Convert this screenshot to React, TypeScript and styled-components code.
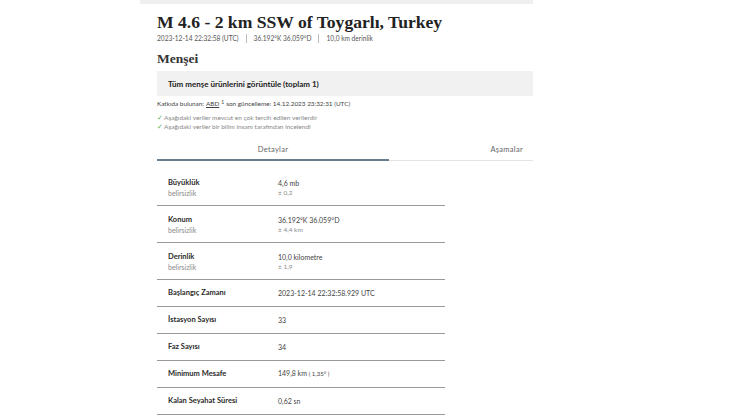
import React from "react";
import styled, { createGlobalStyle } from "styled-components";

const Global = createGlobalStyle`
  html, body { margin: 0; padding: 0; background: #fff; }
  body { font-family: Lato, "Noto Sans", sans-serif; color: #222; }
`;

const Page = styled.div`
  margin-left: 140px;
  width: 393px;
`;

const TopBar = styled.div`
  height: 4px;
  background: #efefef;
`;

const Content = styled.div`
  padding: 0 0 0 17px;
`;

const Title = styled.h1`
  margin: 8px 0 0;
  font-family: "Liberation Serif", serif;
  font-weight: bold;
  font-size: 17.6px;
  line-height: 21px;
  color: #222;
`;

const Meta = styled.div`
  display: flex;
  align-items: center;
  margin-top: 0;
  font-size: 6.6px;
  color: #555;
  line-height: 10px;
`;

const Sep = styled.span`
  display: inline-block;
  width: 1px;
  height: 9px;
  background: #bbb;
  margin: 0 7px;
`;

const Section = styled.h2`
  margin: 7.5px 0 0;
  font-family: "Liberation Serif", serif;
  font-weight: bold;
  font-size: 13.5px;
  line-height: 16px;
  color: #333;
`;

const GreyBox = styled.div`
  margin-top: 4.5px;
  background: #f1f1f1;
  height: 25px;
  display: flex;
  align-items: center;
  padding-left: 11px;
  font-size: 8px;
  font-weight: bold;
  color: #222;
`;

const Contrib = styled.div`
  margin-top: 3px;
  font-size: 6.4px;
  line-height: 10px;
  height: 10px;
  color: #444;
`;

const Link = styled.span`
  text-decoration: underline;
  margin-left: 2px;
`;

const Sup = styled.span`
  font-size: 5px;
  line-height: 0;
  position: relative;
  top: -2px;
  margin: 0 2px;
`;

const Checks = styled.div`
  margin-top: 3.5px;
  font-size: 6.5px;
  line-height: 9px;
  color: #888;
`;

const Tick = styled.span`
  color: #5cae5c;
  margin-right: 1px;
`;

const Tabs = styled.div`
  display: flex;
  margin-top: 12px;
  border-bottom: 1px solid #e4e4e4;
`;

const Tab = styled.div<{ $active?: boolean }>`
  flex: ${(p) => (p.$active ? "0 0 232px" : "1")};
  text-align: ${(p) => (p.$active ? "center" : "right")};
  padding: ${(p) => (p.$active ? "0" : "0 10px 0 0")};
  font-size: 7.5px;
  letter-spacing: 0.3px;
  color: #666;
  height: 16px;
  line-height: 14px;
  border-bottom: ${(p) => (p.$active ? "2px solid #6a7d8c" : "2px solid transparent")};
  margin-bottom: -1px;
`;

const Table = styled.div`
  width: 288px;
  margin-top: 8px;
`;

const Row = styled.div<{ $tall?: boolean }>`
  display: grid;
  grid-template-columns: 110px 1fr;
  align-items: ${(p) => (p.$tall ? "start" : "center")};
  box-sizing: border-box;
  height: ${(p) => (p.$tall ? "37px" : "27px")};
  padding: ${(p) => (p.$tall ? "9.5px 0 0 11px" : "0 0 0 11px")};
  border-bottom: 1px solid #999;
`;

const Label = styled.div`
  font-size: 7.5px;
  font-weight: bold;
  color: #2a2a2a;
  line-height: 10px;
`;

const Sub = styled.div`
  font-size: 7px;
  color: #8a8a8a;
  line-height: 10px;
  font-weight: normal;
`;

const VSub = styled.div`
  font-size: 6.5px;
  color: #8a8a8a;
  line-height: 10px;
`;

const Value = styled.div`
  font-size: 7px;
  color: #444;
  line-height: 10px;
`;

const Small = styled.span`
  font-size: 6px;
`;

type R = { label: string; sub?: string; value: React.ReactNode; vsub?: string };

const rows: R[] = [
  { label: "Büyüklük", sub: "belirsizlik", value: "4,6 mb", vsub: "± 0,2" },
  { label: "Konum", sub: "belirsizlik", value: "36.192°K  36.059°D", vsub: "± 4,4 km" },
  { label: "Derinlik", sub: "belirsizlik", value: "10,0 kilometre", vsub: "± 1,9" },
  { label: "Başlangıç Zamanı", value: "2023-12-14 22:32:58.929 UTC" },
  { label: "İstasyon Sayısı", value: "33" },
  { label: "Faz Sayısı", value: "34" },
  { label: "Minimum Mesafe", value: <>149,8 km <Small>( 1,35° )</Small></> },
  { label: "Kalan Seyahat Süresi", value: "0,62 sn" },
];

export default function App() {
  return (
    <>
      <Global />
      <Page>
        <TopBar />
        <Content>
          <Title>M 4.6 - 2 km SSW of Toygarlı, Turkey</Title>
          <Meta>
            <span>2023-12-14 22:32:58 (UTC)</span>
            <Sep />
            <span>36.192°K 36.059°D</span>
            <Sep />
            <span>10,0 km derinlik</span>
          </Meta>
          <Section>Menşei</Section>
          <GreyBox>Tüm menşe ürünlerini görüntüle (toplam 1)</GreyBox>
          <Contrib>
            Katkıda bulunan:<Link>ABD</Link>
            <Sup>1</Sup>son güncelleme: 14.12.2023 23:32:31 (UTC)
          </Contrib>
          <Checks>
            <div><Tick>✓</Tick>Aşağıdaki veriler mevcut en çok tercih edilen verilerdir</div>
            <div><Tick>✓</Tick>Aşağıdaki veriler bir bilim insanı tarafından incelendi</div>
          </Checks>
          <Tabs>
            <Tab $active>Detaylar</Tab>
            <Tab>Aşamalar</Tab>
          </Tabs>
          <Table>
            {rows.map((r) => (
              <Row key={r.label} $tall={!!r.sub}>
                <Label>
                  {r.label}
                  {r.sub && <Sub>{r.sub}</Sub>}
                </Label>
                <Value>
                  {r.value}
                  {r.vsub && <VSub>{r.vsub}</VSub>}
                </Value>
              </Row>
            ))}
          </Table>
        </Content>
      </Page>
    </>
  );
}
